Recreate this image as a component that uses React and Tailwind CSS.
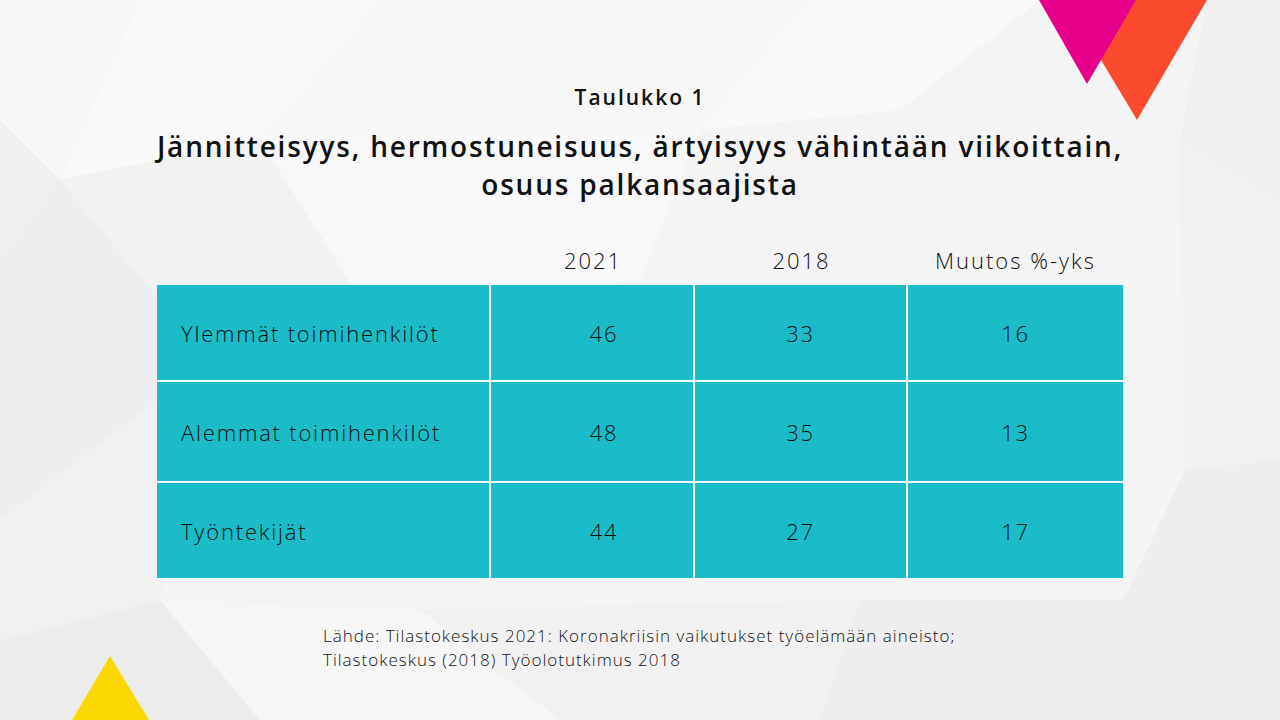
import React from 'react';

const rows = [
  { label: 'Ylemmät toimihenkilöt', a: '46', b: '33', c: '16', h: 'h-[95px]' },
  { label: 'Alemmat toimihenkilöt', a: '48', b: '35', c: '13', h: 'h-[99px]' },
  { label: 'Työntekijät', a: '44', b: '27', c: '17', h: 'h-[95px]' },
];

const Backdrop = () => (
  <svg className="absolute inset-0" width="1280" height="720" viewBox="0 0 1280 720">
    <rect width="1280" height="720" fill="#f4f4f5" />
    {/* faint facets */}
    <polygon points="0,0 140,0 60,180 0,120" fill="#f7f7f8" />
    <polygon points="0,120 60,180 0,260" fill="#efeff0" />
    <polygon points="0,260 60,180 210,360 0,520" fill="#eeeeef" />
    <polygon points="140,0 380,0 260,140 60,180" fill="#f9f9f9" />
    <polygon points="380,0 810,0 700,130 260,140" fill="#f7f7f8" />
    <polygon points="810,0 1040,0 900,110 700,130" fill="#f9f9f9" />
    <polygon points="60,180 260,140 380,330 210,360" fill="#f2f2f3" />
    <polygon points="260,140 700,130 640,280 380,330" fill="#f8f8f8" />
    <polygon points="1207,0 1280,0 1280,200 1180,140" fill="#f0f0f1" />
    <polygon points="1180,140 1280,200 1280,460 1185,470" fill="#f1f1f2" />
    <polygon points="1185,470 1280,460 1280,720 1210,720" fill="#eeeeef" />
    <polygon points="0,520 210,360 160,600 0,640" fill="#f1f1f2" />
    <polygon points="0,640 160,600 260,720 0,720" fill="#ececed" />
    <polygon points="260,720 160,600 420,610 560,720" fill="#f6f6f7" />
    <polygon points="560,720 420,610 860,600 820,720" fill="#f1f1f2" />
    <polygon points="820,720 860,600 1185,470 1210,720" fill="#eeeeef" />
    <polygon points="860,600 1123,600 1185,470" fill="#f5f5f6" />
    {/* accent triangles */}
    <polygon points="1065,0 1207,0 1137,120" fill="#fc4a2e" />
    <polygon points="1039,0 1136,0 1087,84" fill="#e6008c" />
    <polygon points="110,656 72,720 149,720" fill="#fdd800" />
  </svg>
);

export default function App() {
  return (
    <div className="relative w-[1280px] h-[720px] overflow-hidden text-[#111111] font-['Open_Sans','Liberation_Sans',sans-serif]">
      <Backdrop />
      <div className="relative flex flex-col items-center pt-[83px]">
        <div className="text-[21px] leading-[28px] font-semibold tracking-[2px]">Taulukko 1</div>
        <h1 className="mt-[16px] text-[28px] leading-[38px] font-semibold text-center tracking-[1.8px]">
          Jännitteisyys, hermostuneisuus, ärtyisyys vähintään viikoittain,
          <br />
          osuus palkansaajista
        </h1>

        <div className="mt-[42px] w-[966px]">
          <div className="grid grid-cols-[334px_204px_213px_215px] text-[22px] leading-[30px] font-light tracking-[2px] h-[40px]">
            <div />
            <div className="text-center">2021</div>
            <div className="text-center">2018</div>
            <div className="text-center">Muutos %-yks</div>
          </div>
          <div className="grid grid-cols-[332px_202px_211px_215px] gap-[2px] bg-white text-[22px] leading-[30px] font-light tracking-[1.8px]">
            {rows.map((r) => (
              <React.Fragment key={r.label}>
                <div className={`${r.h} bg-[#1abcc9] flex items-center pl-[24px]`}>{r.label}</div>
                <div className={`${r.h} bg-[#1abcc9] flex items-center justify-center pl-[24px]`}>{r.a}</div>
                <div className={`${r.h} bg-[#1abcc9] flex items-center justify-center`}>{r.b}</div>
                <div className={`${r.h} bg-[#1abcc9] flex items-center justify-center`}>{r.c}</div>
              </React.Fragment>
            ))}
          </div>
        </div>

        <div className="self-start ml-[323px] mt-[46px] text-[17px] leading-[24px] font-light tracking-[1px]">
          <div>Lähde: Tilastokeskus 2021: Koronakriisin vaikutukset työelämään aineisto;</div>
          <div>Tilastokeskus (2018) Työolotutkimus 2018</div>
        </div>
      </div>
    </div>
  );
}
